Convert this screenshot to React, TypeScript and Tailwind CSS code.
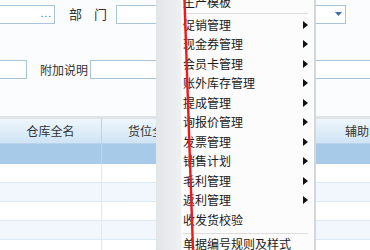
const menuItems: { label: string; sub?: boolean }[] = [
  { label: "促销管理", sub: true },
  { label: "现金券管理", sub: true },
  { label: "会员卡管理", sub: true },
  { label: "账外库存管理", sub: true },
  { label: "提成管理", sub: true },
  { label: "询报价管理", sub: true },
  { label: "发票管理", sub: true },
  { label: "销售计划", sub: true },
  { label: "毛利管理", sub: true },
  { label: "返利管理", sub: true },
  { label: "收发货校验" },
];

const Arrow = () => (
  <svg width="5" height="8" viewBox="0 0 5 8" className="shrink-0">
    <path d="M0 0 L5 4 L0 8 Z" fill="#111" />
  </svg>
);

export default function App() {
  const font = { fontFamily: '"Noto Sans CJK SC", "Noto Sans", sans-serif' };
  return (
    <div
      className="relative w-[370px] h-[250px] overflow-hidden bg-[#fbfcfd] text-[#222]"
      style={font}
    >
      {/* ===== Form ===== */}
      <div className="flex items-center h-[20px] mt-[4px] ml-[-4px]">
        <div className="w-[59px] h-[19px] border border-[#a9c4dd] bg-white flex items-center justify-end pr-[2px]">
          <span className="text-[#3a6fb0] text-[10px] leading-none tracking-[1px] mb-[3px]">...</span>
        </div>
        <div className="w-[61px] flex justify-between pl-[14px] pr-[9px] text-[13px] text-[#333]">
          <span>部</span>
          <span>门</span>
        </div>
        <div className="w-[230px] h-[19px] border border-[#a9c4dd] bg-white flex items-center justify-end pr-[3px]">
          <svg width="7" height="4" viewBox="0 0 7 4">
            <path d="M0 0 L7 0 L3.5 4 Z" fill="#3a6fb0" />
          </svg>
        </div>
      </div>

      <div className="flex items-center h-[19px] mt-[36px] ml-[-4px]">
        <div className="w-[31px] h-[19px] border border-[#a9c4dd] bg-white" />
        <div className="w-[63px] pl-[13px] text-[12px] text-[#333]">附加说明</div>
        <div className="flex-1 h-[19px] border border-[#a9c4dd] border-r-0 bg-white" />
      </div>

      {/* ===== Table ===== */}
      <div className="mt-[37px] border-t-[3px] border-[#dfe3e7]">
        <div className="flex h-[25px] bg-gradient-to-b from-[#eef6fc] to-[#cfe4f5] border-b border-[#b8d3ea] text-[12px] text-[#333]">
          <div className="w-[102px] shrink-0 border-r border-[#b9d4ea] flex items-center justify-center">仓库全名</div>
          <div className="w-[104px] shrink-0 flex items-center pl-[26px]">货位全名</div>
          <div className="flex-1 flex items-center pl-[139px] whitespace-nowrap">辅助单位</div>
        </div>
        <div className="flex h-[20px] bg-[#a7cae9]">
          <div className="w-[102px] border-r border-[#bcd6ec]" />
        </div>
        {[0, 1, 2, 3, 4].map((i) => (
          <div
            key={i}
            className={`flex h-[19px] border-b border-[#dceaf6] ${i % 2 ? "bg-[#f1f7fd]" : "bg-white"}`}
          >
            <div className="w-[102px] border-r border-[#dceaf6]" />
          </div>
        ))}
      </div>

      {/* ===== Context menu ===== */}
      <div className="absolute left-[156px] top-[-8px] w-[160px] h-[270px] flex bg-[#fcfcfc] border-r-2 border-[#d4d6d8] text-[12px] text-[#1a1a1a]">
        <div className="w-[26px] shrink-0 bg-gradient-to-r from-[#e3e6e9] to-[#eef0f2] border-r border-[#f8f8f8]" />
        <div className="flex-1 flex flex-col pl-[1px] pr-[6px]">
          <div className="h-[19px] flex items-center">生产模板</div>
          <div className="h-[3px] border-b border-[#dcdcdc] mb-[1px]" />
          {menuItems.map((m) => (
            <div key={m.label} className="h-[19.5px] flex items-center justify-between shrink-0">
              <span>{m.label}</span>
              {m.sub && <Arrow />}
            </div>
          ))}
          <div className="h-[4px] border-b border-[#dcdcdc] mb-[1px]" />
          <div className="h-[19px] flex items-center">单据编号规则及样式</div>
        </div>
      </div>

      {/* ===== Red annotation line ===== */}
      <svg className="absolute inset-0 pointer-events-none" width="370" height="250">
        <line x1="184.5" y1="0" x2="193" y2="250" stroke="#f01818" strokeWidth="2.4" />
      </svg>
    </div>
  );
}
